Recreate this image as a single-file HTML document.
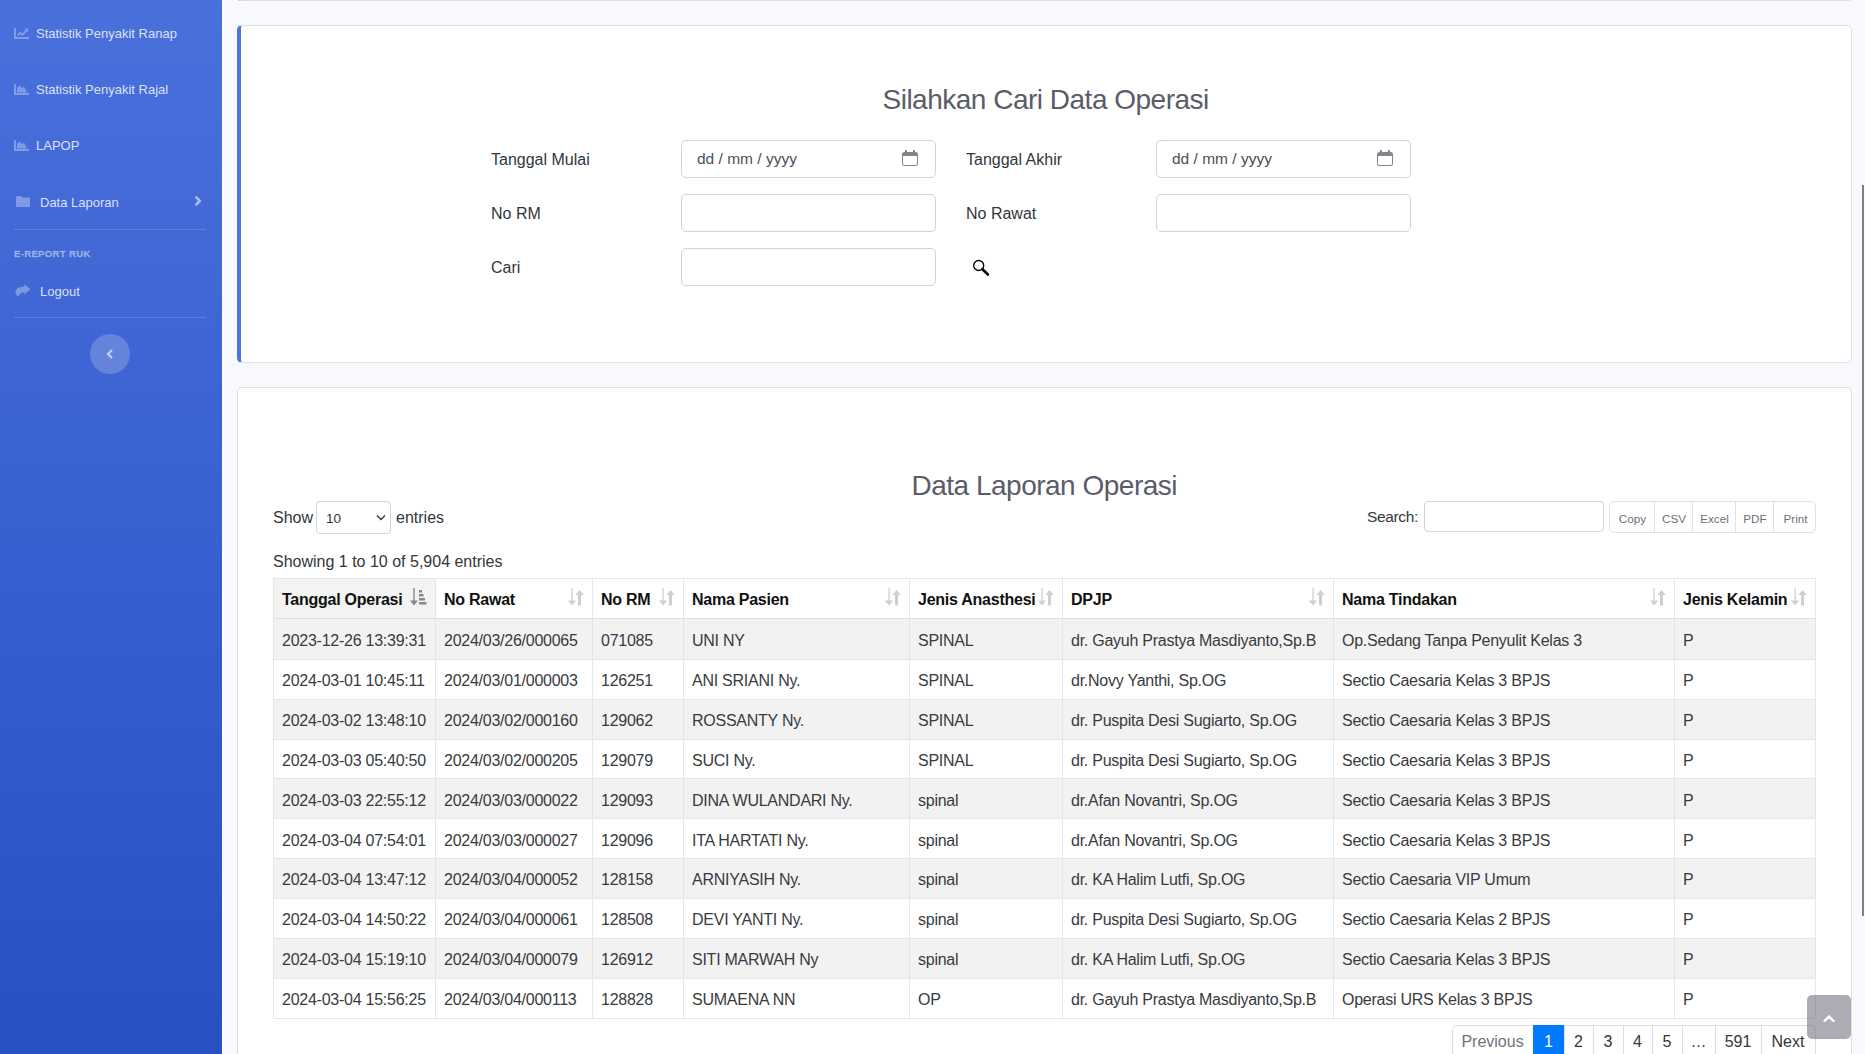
<!DOCTYPE html>
<html><head><meta charset="utf-8">
<style>
*{box-sizing:border-box;margin:0;padding:0}
html,body{width:1865px;height:1054px;overflow:hidden;background:#f8f9fc;font-family:"Liberation Sans",sans-serif;color:#212529}
.a{position:absolute;white-space:nowrap;line-height:1}
#sb{position:absolute;left:0;top:0;width:222px;height:1054px;background:linear-gradient(180deg,#4a70dc 0%,#2850c3 100%)}
#sbline{position:absolute;left:222px;top:0;width:1px;height:1054px;background:#fff}
.nl{font-size:13px;color:rgba(255,255,255,.82)}
.ic{position:absolute;fill:rgba(255,255,255,.32)}
.hr{position:absolute;left:14px;width:192px;height:1px;background:rgba(255,255,255,.15)}
.card{position:absolute;background:#fff;border:1px solid #dfdfe2;border-radius:4px}
.fc{position:absolute;background:#fff;border:1px solid #cfd3db;border-radius:5px}
.lbl{font-size:16px;color:#33363b}
</style></head><body>
<div id="sb">
  <!-- chart-line icon -->
  <svg class="ic" style="left:14px;top:28px" width="15" height="11" viewBox="0 0 15 11"><path d="M0 0h2v9h13v2H0z"/><path d="M3 7l3-3.5 2.5 2 3-3.5-1.3-1.2H14v3.8l-1.2-1.2L8.7 8 6.2 6 4.3 8.3z"/></svg>
  <div class="a nl" style="left:36px;top:27px">Statistik Penyakit Ranap</div>
  <!-- area chart -->
  <svg class="ic" style="left:14px;top:84px" width="15" height="11" viewBox="0 0 15 11"><path d="M0 0h2v9h13v2H0z"/><path d="M3 8.5V4l2.5-2.5 2.5 2.5 2-1.5 3 6z"/></svg>
  <div class="a nl" style="left:36px;top:83px">Statistik Penyakit Rajal</div>
  <svg class="ic" style="left:14px;top:140px" width="15" height="11" viewBox="0 0 15 11"><path d="M0 0h2v9h13v2H0z"/><path d="M3 8.5V4l2.5-2.5 2.5 2.5 2-1.5 3 6z"/></svg>
  <div class="a nl" style="left:36px;top:139px">LAPOP</div>
  <!-- folder -->
  <svg class="ic" style="left:16px;top:196px" width="14.3" height="11" viewBox="0 0 15 12" preserveAspectRatio="none"><path d="M0 1.2C0 .5.5 0 1.2 0h4l1.5 1.6h7c.7 0 1.3.5 1.3 1.2v8c0 .7-.6 1.2-1.3 1.2H1.2C.5 12 0 11.5 0 10.8z"/></svg>
  <div class="a nl" style="left:40px;top:195.5px">Data Laporan</div>
  <svg style="position:absolute;left:194px;top:195px" width="9" height="12" viewBox="0 0 9 12"><path d="M2.3 2.3l3.6 3.6-3.6 3.6" stroke="rgba(255,255,255,.55)" stroke-width="2.5" stroke-linecap="round" stroke-linejoin="round" fill="none"/></svg>
  <div class="hr" style="top:229px"></div>
  <div class="a" style="left:14px;top:248.5px;font-size:9.6px;font-weight:bold;color:rgba(255,255,255,.45);letter-spacing:.3px;-webkit-text-stroke:.3px rgba(255,255,255,.3)">E-REPORT RUK</div>
  <!-- share icon -->
  <svg class="ic" style="left:15px;top:284px" width="16" height="14" viewBox="0 0 16 14"><path d="M15.3 5.3L9.4 0.2V2.4C4.5 2.6 0.4 4.6 0.4 8C0.4 10 1.8 11.8 3.4 12.7C3.8 10.6 5.6 8.6 9.4 8.3V10.4Z"/></svg>
  <div class="a nl" style="left:40px;top:284.5px">Logout</div>
  <div class="hr" style="top:317px"></div>
  <div style="position:absolute;left:90px;top:334px;width:40px;height:40px;border-radius:50%;background:rgba(255,255,255,.2)"></div>
  <svg style="position:absolute;left:106px;top:349px" width="8" height="10" viewBox="0 0 8 10"><path d="M6 1L2 5l4 4" stroke="rgba(255,255,255,.62)" stroke-width="2.2" fill="none"/></svg>
</div>
<div id="sbline"></div>

<!-- top card remnant -->
<div class="card" style="left:237px;top:-20px;width:1615px;height:21px;border-left:4px solid #4e73df"></div>

<!-- card 1 -->
<div class="card" style="left:237px;top:25px;width:1615px;height:338px;border-left:4px solid #4e73df;border-radius:5px"></div>
<div class="a" style="left:882.5px;top:86.2px;font-size:28px;letter-spacing:-.5px;color:#5a5c69">Silahkan Cari Data Operasi</div>

<div class="a lbl" style="left:491px;top:152px">Tanggal Mulai</div>
<div class="fc" style="left:681px;top:140px;width:255px;height:38px"></div>
<div class="a" style="left:697px;top:151px;font-size:15.5px;color:#495057">dd / mm / yyyy</div>
<svg style="position:absolute;left:902px;top:150px" width="16" height="16" viewBox="0 0 16 16"><path d="M2.5 2h11A2.5 2.5 0 0 1 16 4.5v9a2.5 2.5 0 0 1-2.5 2.5h-11A2.5 2.5 0 0 1 0 13.5v-9A2.5 2.5 0 0 1 2.5 2zM1 6v7.5A1.5 1.5 0 0 0 2.5 15h11a1.5 1.5 0 0 0 1.5-1.5V6z" fill="#80868b" fill-rule="evenodd"/><rect x="3" y="0" width="2" height="3" fill="#80868b"/><rect x="11" y="0" width="2" height="3" fill="#80868b"/></svg>

<div class="a lbl" style="left:966px;top:152px">Tanggal Akhir</div>
<div class="fc" style="left:1156px;top:140px;width:255px;height:38px"></div>
<div class="a" style="left:1172px;top:151px;font-size:15.5px;color:#495057">dd / mm / yyyy</div>
<svg style="position:absolute;left:1377px;top:150px" width="16" height="16" viewBox="0 0 16 16"><path d="M2.5 2h11A2.5 2.5 0 0 1 16 4.5v9a2.5 2.5 0 0 1-2.5 2.5h-11A2.5 2.5 0 0 1 0 13.5v-9A2.5 2.5 0 0 1 2.5 2zM1 6v7.5A1.5 1.5 0 0 0 2.5 15h11a1.5 1.5 0 0 0 1.5-1.5V6z" fill="#80868b" fill-rule="evenodd"/><rect x="3" y="0" width="2" height="3" fill="#80868b"/><rect x="11" y="0" width="2" height="3" fill="#80868b"/></svg>

<div class="a lbl" style="left:491px;top:206px">No RM</div>
<div class="fc" style="left:681px;top:194px;width:255px;height:38px"></div>
<div class="a lbl" style="left:966px;top:206px">No Rawat</div>
<div class="fc" style="left:1156px;top:194px;width:255px;height:38px"></div>

<div class="a lbl" style="left:491px;top:260px">Cari</div>
<div class="fc" style="left:681px;top:248px;width:255px;height:38px"></div>
<svg style="position:absolute;left:972px;top:259px" width="18" height="18" viewBox="0 0 18 18"><circle cx="6.7" cy="6.5" r="5" fill="none" stroke="#000" stroke-width="1.3"/><path d="M10.4 10.2l5.5 5.3" stroke="#000" stroke-width="2.6" stroke-linecap="round"/></svg>

<!-- card 2 -->
<div class="card" style="left:237px;top:387px;width:1615px;height:800px;border-radius:5px"></div>
<!--C2-->
<div class="a" style="left:911.5px;top:472.2px;font-size:28px;letter-spacing:-.5px;color:#5a5c69">Data Laporan Operasi</div>
<div class="a lbl" style="left:273px;top:510px">Show</div>
<div class="fc" style="left:316px;top:501px;width:75px;height:33px;border-radius:4px"></div>
<div class="a" style="left:326px;top:511.5px;font-size:13.6px;color:#33363b">10</div>
<svg style="position:absolute;left:376px;top:514px" width="10" height="8" viewBox="0 0 10 8"><path d="M1 1.5l4 4 4-4" stroke="#343a40" stroke-width="1.4" fill="none"/></svg>
<div class="a lbl" style="left:396px;top:510px">entries</div>
<div class="a lbl" style="left:1367px;top:509px;font-size:15.5px;letter-spacing:-.35px">Search:</div>
<div class="fc" style="left:1424px;top:501px;width:180px;height:31px;border-radius:4px"></div>
<div style="position:absolute;left:1609px;top:501px;width:207px;height:32px;border:1px solid #dfe2e7;border-radius:5px;background:#fff"></div>
<div style="position:absolute;left:1654px;top:502px;width:1px;height:30px;background:#dfe2e7"></div>
<div style="position:absolute;left:1692px;top:502px;width:1px;height:30px;background:#dfe2e7"></div>
<div style="position:absolute;left:1735px;top:502px;width:1px;height:30px;background:#dfe2e7"></div>
<div style="position:absolute;left:1773px;top:502px;width:1px;height:30px;background:#dfe2e7"></div>
<div class="a" style="left:1610px;width:45px;text-align:center;top:512.5px;font-size:11.7px;color:#6c6e78">Copy</div>
<div class="a" style="left:1655px;width:38px;text-align:center;top:512.5px;font-size:11.7px;color:#6c6e78">CSV</div>
<div class="a" style="left:1693px;width:43px;text-align:center;top:512.5px;font-size:11.7px;color:#6c6e78">Excel</div>
<div class="a" style="left:1736px;width:38px;text-align:center;top:512.5px;font-size:11.7px;color:#6c6e78">PDF</div>
<div class="a" style="left:1774px;width:43px;text-align:center;top:512.5px;font-size:11.7px;color:#6c6e78">Print</div>
<div class="a lbl" style="left:273px;top:554px">Showing 1 to 10 of 5,904 entries</div>
<div style="position:absolute;left:273px;top:578px;width:1543px;height:1px;background:#e3e6f0"></div>
<div style="position:absolute;left:273px;top:579px;width:162px;height:39px;background:#f3f3f3"></div>
<div style="position:absolute;left:273px;top:619px;width:1542px;height:40px;background:#f2f2f2"></div>
<div style="position:absolute;left:273px;top:618px;width:1543px;height:1px;background:#dedfe3"></div>
<div style="position:absolute;left:273px;top:660px;width:1542px;height:39px;background:#fff"></div>
<div style="position:absolute;left:273px;top:659px;width:1543px;height:1px;background:#e3e6ea"></div>
<div style="position:absolute;left:273px;top:700px;width:1542px;height:39px;background:#f2f2f2"></div>
<div style="position:absolute;left:273px;top:699px;width:1543px;height:1px;background:#e3e6ea"></div>
<div style="position:absolute;left:273px;top:740px;width:1542px;height:38px;background:#fff"></div>
<div style="position:absolute;left:273px;top:739px;width:1543px;height:1px;background:#e3e6ea"></div>
<div style="position:absolute;left:273px;top:779px;width:1542px;height:39px;background:#f2f2f2"></div>
<div style="position:absolute;left:273px;top:778px;width:1543px;height:1px;background:#e3e6ea"></div>
<div style="position:absolute;left:273px;top:819px;width:1542px;height:39px;background:#fff"></div>
<div style="position:absolute;left:273px;top:818px;width:1543px;height:1px;background:#e3e6ea"></div>
<div style="position:absolute;left:273px;top:859px;width:1542px;height:39px;background:#f2f2f2"></div>
<div style="position:absolute;left:273px;top:858px;width:1543px;height:1px;background:#e3e6ea"></div>
<div style="position:absolute;left:273px;top:899px;width:1542px;height:39px;background:#fff"></div>
<div style="position:absolute;left:273px;top:898px;width:1543px;height:1px;background:#e3e6ea"></div>
<div style="position:absolute;left:273px;top:939px;width:1542px;height:39px;background:#f2f2f2"></div>
<div style="position:absolute;left:273px;top:938px;width:1543px;height:1px;background:#e3e6ea"></div>
<div style="position:absolute;left:273px;top:979px;width:1542px;height:39px;background:#fff"></div>
<div style="position:absolute;left:273px;top:978px;width:1543px;height:1px;background:#e3e6ea"></div>
<div style="position:absolute;left:273px;top:1018px;width:1543px;height:1px;background:#e3e6ea"></div>
<div style="position:absolute;left:273px;top:578px;width:1px;height:441px;background:#e6e6e6"></div>
<div style="position:absolute;left:435px;top:578px;width:1px;height:441px;background:#e6e6e6"></div>
<div style="position:absolute;left:592px;top:578px;width:1px;height:441px;background:#e6e6e6"></div>
<div style="position:absolute;left:683px;top:578px;width:1px;height:441px;background:#e6e6e6"></div>
<div style="position:absolute;left:909px;top:578px;width:1px;height:441px;background:#e6e6e6"></div>
<div style="position:absolute;left:1062px;top:578px;width:1px;height:441px;background:#e6e6e6"></div>
<div style="position:absolute;left:1333px;top:578px;width:1px;height:441px;background:#e6e6e6"></div>
<div style="position:absolute;left:1674px;top:578px;width:1px;height:441px;background:#e6e6e6"></div>
<div style="position:absolute;left:1815px;top:578px;width:1px;height:441px;background:#e6e6e6"></div>
<div class="a" style="left:282px;top:592px;font-size:16px;letter-spacing:-.25px;font-weight:bold;color:#111">Tanggal Operasi</div>
<svg style="position:absolute;left:409px;top:588px" width="18" height="18" viewBox="0 0 18 18" fill="#888"><rect x="4.3" y="0" width="1.4" height="13"/><path d="M1 12.5h8l-4 5z"/><rect x="10" y="2" width="3" height="2.5"/><rect x="10" y="6" width="4.5" height="2.5"/><rect x="10" y="10" width="6" height="2.5"/><rect x="10" y="14" width="7.5" height="2.5"/></svg>
<div class="a" style="left:444px;top:592px;font-size:16px;letter-spacing:-.25px;font-weight:bold;color:#111">No Rawat</div>
<svg style="position:absolute;left:567px;top:588px" width="17" height="18" viewBox="0 0 17 18" fill="#cfcfd3"><rect x="4.4" y="0" width="1.3" height="13"/><path d="M1 12.5h8l-4 5z"/><rect x="11" y="6" width="3" height="11.5"/><path d="M8.3 7h8.5l-4.25-5z"/></svg>
<div class="a" style="left:601px;top:592px;font-size:16px;letter-spacing:-.25px;font-weight:bold;color:#111">No RM</div>
<svg style="position:absolute;left:658px;top:588px" width="17" height="18" viewBox="0 0 17 18" fill="#cfcfd3"><rect x="4.4" y="0" width="1.3" height="13"/><path d="M1 12.5h8l-4 5z"/><rect x="11" y="6" width="3" height="11.5"/><path d="M8.3 7h8.5l-4.25-5z"/></svg>
<div class="a" style="left:692px;top:592px;font-size:16px;letter-spacing:-.25px;font-weight:bold;color:#111">Nama Pasien</div>
<svg style="position:absolute;left:884px;top:588px" width="17" height="18" viewBox="0 0 17 18" fill="#cfcfd3"><rect x="4.4" y="0" width="1.3" height="13"/><path d="M1 12.5h8l-4 5z"/><rect x="11" y="6" width="3" height="11.5"/><path d="M8.3 7h8.5l-4.25-5z"/></svg>
<div class="a" style="left:918px;top:592px;font-size:16px;letter-spacing:-.25px;font-weight:bold;color:#111">Jenis Anasthesi</div>
<svg style="position:absolute;left:1037px;top:588px" width="17" height="18" viewBox="0 0 17 18" fill="#cfcfd3"><rect x="4.4" y="0" width="1.3" height="13"/><path d="M1 12.5h8l-4 5z"/><rect x="11" y="6" width="3" height="11.5"/><path d="M8.3 7h8.5l-4.25-5z"/></svg>
<div class="a" style="left:1071px;top:592px;font-size:16px;letter-spacing:-.25px;font-weight:bold;color:#111">DPJP</div>
<svg style="position:absolute;left:1308px;top:588px" width="17" height="18" viewBox="0 0 17 18" fill="#cfcfd3"><rect x="4.4" y="0" width="1.3" height="13"/><path d="M1 12.5h8l-4 5z"/><rect x="11" y="6" width="3" height="11.5"/><path d="M8.3 7h8.5l-4.25-5z"/></svg>
<div class="a" style="left:1342px;top:592px;font-size:16px;letter-spacing:-.25px;font-weight:bold;color:#111">Nama Tindakan</div>
<svg style="position:absolute;left:1649px;top:588px" width="17" height="18" viewBox="0 0 17 18" fill="#cfcfd3"><rect x="4.4" y="0" width="1.3" height="13"/><path d="M1 12.5h8l-4 5z"/><rect x="11" y="6" width="3" height="11.5"/><path d="M8.3 7h8.5l-4.25-5z"/></svg>
<div class="a" style="left:1683px;top:592px;font-size:16px;letter-spacing:-.25px;font-weight:bold;color:#111">Jenis Kelamin</div>
<svg style="position:absolute;left:1790px;top:588px" width="17" height="18" viewBox="0 0 17 18" fill="#cfcfd3"><rect x="4.4" y="0" width="1.3" height="13"/><path d="M1 12.5h8l-4 5z"/><rect x="11" y="6" width="3" height="11.5"/><path d="M8.3 7h8.5l-4.25-5z"/></svg>
<div class="a" style="left:282px;top:633.0px;font-size:16px;letter-spacing:-.25px;color:#383b40">2023-12-26 13:39:31</div>
<div class="a" style="left:444px;top:633.0px;font-size:16px;letter-spacing:-.25px;color:#383b40">2024/03/26/000065</div>
<div class="a" style="left:601px;top:633.0px;font-size:16px;letter-spacing:-.25px;color:#383b40">071085</div>
<div class="a" style="left:692px;top:633.0px;font-size:16px;letter-spacing:-.25px;color:#383b40">UNI NY</div>
<div class="a" style="left:918px;top:633.0px;font-size:16px;letter-spacing:-.25px;color:#383b40">SPINAL</div>
<div class="a" style="left:1071px;top:633.0px;font-size:16px;letter-spacing:-.25px;color:#383b40">dr. Gayuh Prastya Masdiyanto,Sp.B</div>
<div class="a" style="left:1342px;top:633.0px;font-size:16px;letter-spacing:-.25px;color:#383b40">Op.Sedang Tanpa Penyulit Kelas 3</div>
<div class="a" style="left:1683px;top:633.0px;font-size:16px;letter-spacing:-.25px;color:#383b40">P</div>
<div class="a" style="left:282px;top:672.9px;font-size:16px;letter-spacing:-.25px;color:#383b40">2024-03-01 10:45:11</div>
<div class="a" style="left:444px;top:672.9px;font-size:16px;letter-spacing:-.25px;color:#383b40">2024/03/01/000003</div>
<div class="a" style="left:601px;top:672.9px;font-size:16px;letter-spacing:-.25px;color:#383b40">126251</div>
<div class="a" style="left:692px;top:672.9px;font-size:16px;letter-spacing:-.25px;color:#383b40">ANI SRIANI Ny.</div>
<div class="a" style="left:918px;top:672.9px;font-size:16px;letter-spacing:-.25px;color:#383b40">SPINAL</div>
<div class="a" style="left:1071px;top:672.9px;font-size:16px;letter-spacing:-.25px;color:#383b40">dr.Novy Yanthi, Sp.OG</div>
<div class="a" style="left:1342px;top:672.9px;font-size:16px;letter-spacing:-.25px;color:#383b40">Sectio Caesaria Kelas 3 BPJS</div>
<div class="a" style="left:1683px;top:672.9px;font-size:16px;letter-spacing:-.25px;color:#383b40">P</div>
<div class="a" style="left:282px;top:712.8px;font-size:16px;letter-spacing:-.25px;color:#383b40">2024-03-02 13:48:10</div>
<div class="a" style="left:444px;top:712.8px;font-size:16px;letter-spacing:-.25px;color:#383b40">2024/03/02/000160</div>
<div class="a" style="left:601px;top:712.8px;font-size:16px;letter-spacing:-.25px;color:#383b40">129062</div>
<div class="a" style="left:692px;top:712.8px;font-size:16px;letter-spacing:-.25px;color:#383b40">ROSSANTY Ny.</div>
<div class="a" style="left:918px;top:712.8px;font-size:16px;letter-spacing:-.25px;color:#383b40">SPINAL</div>
<div class="a" style="left:1071px;top:712.8px;font-size:16px;letter-spacing:-.25px;color:#383b40">dr. Puspita Desi Sugiarto, Sp.OG</div>
<div class="a" style="left:1342px;top:712.8px;font-size:16px;letter-spacing:-.25px;color:#383b40">Sectio Caesaria Kelas 3 BPJS</div>
<div class="a" style="left:1683px;top:712.8px;font-size:16px;letter-spacing:-.25px;color:#383b40">P</div>
<div class="a" style="left:282px;top:752.7px;font-size:16px;letter-spacing:-.25px;color:#383b40">2024-03-03 05:40:50</div>
<div class="a" style="left:444px;top:752.7px;font-size:16px;letter-spacing:-.25px;color:#383b40">2024/03/02/000205</div>
<div class="a" style="left:601px;top:752.7px;font-size:16px;letter-spacing:-.25px;color:#383b40">129079</div>
<div class="a" style="left:692px;top:752.7px;font-size:16px;letter-spacing:-.25px;color:#383b40">SUCI Ny.</div>
<div class="a" style="left:918px;top:752.7px;font-size:16px;letter-spacing:-.25px;color:#383b40">SPINAL</div>
<div class="a" style="left:1071px;top:752.7px;font-size:16px;letter-spacing:-.25px;color:#383b40">dr. Puspita Desi Sugiarto, Sp.OG</div>
<div class="a" style="left:1342px;top:752.7px;font-size:16px;letter-spacing:-.25px;color:#383b40">Sectio Caesaria Kelas 3 BPJS</div>
<div class="a" style="left:1683px;top:752.7px;font-size:16px;letter-spacing:-.25px;color:#383b40">P</div>
<div class="a" style="left:282px;top:792.6px;font-size:16px;letter-spacing:-.25px;color:#383b40">2024-03-03 22:55:12</div>
<div class="a" style="left:444px;top:792.6px;font-size:16px;letter-spacing:-.25px;color:#383b40">2024/03/03/000022</div>
<div class="a" style="left:601px;top:792.6px;font-size:16px;letter-spacing:-.25px;color:#383b40">129093</div>
<div class="a" style="left:692px;top:792.6px;font-size:16px;letter-spacing:-.25px;color:#383b40">DINA WULANDARI Ny.</div>
<div class="a" style="left:918px;top:792.6px;font-size:16px;letter-spacing:-.25px;color:#383b40">spinal</div>
<div class="a" style="left:1071px;top:792.6px;font-size:16px;letter-spacing:-.25px;color:#383b40">dr.Afan Novantri, Sp.OG</div>
<div class="a" style="left:1342px;top:792.6px;font-size:16px;letter-spacing:-.25px;color:#383b40">Sectio Caesaria Kelas 3 BPJS</div>
<div class="a" style="left:1683px;top:792.6px;font-size:16px;letter-spacing:-.25px;color:#383b40">P</div>
<div class="a" style="left:282px;top:832.5px;font-size:16px;letter-spacing:-.25px;color:#383b40">2024-03-04 07:54:01</div>
<div class="a" style="left:444px;top:832.5px;font-size:16px;letter-spacing:-.25px;color:#383b40">2024/03/03/000027</div>
<div class="a" style="left:601px;top:832.5px;font-size:16px;letter-spacing:-.25px;color:#383b40">129096</div>
<div class="a" style="left:692px;top:832.5px;font-size:16px;letter-spacing:-.25px;color:#383b40">ITA HARTATI Ny.</div>
<div class="a" style="left:918px;top:832.5px;font-size:16px;letter-spacing:-.25px;color:#383b40">spinal</div>
<div class="a" style="left:1071px;top:832.5px;font-size:16px;letter-spacing:-.25px;color:#383b40">dr.Afan Novantri, Sp.OG</div>
<div class="a" style="left:1342px;top:832.5px;font-size:16px;letter-spacing:-.25px;color:#383b40">Sectio Caesaria Kelas 3 BPJS</div>
<div class="a" style="left:1683px;top:832.5px;font-size:16px;letter-spacing:-.25px;color:#383b40">P</div>
<div class="a" style="left:282px;top:872.4px;font-size:16px;letter-spacing:-.25px;color:#383b40">2024-03-04 13:47:12</div>
<div class="a" style="left:444px;top:872.4px;font-size:16px;letter-spacing:-.25px;color:#383b40">2024/03/04/000052</div>
<div class="a" style="left:601px;top:872.4px;font-size:16px;letter-spacing:-.25px;color:#383b40">128158</div>
<div class="a" style="left:692px;top:872.4px;font-size:16px;letter-spacing:-.25px;color:#383b40">ARNIYASIH Ny.</div>
<div class="a" style="left:918px;top:872.4px;font-size:16px;letter-spacing:-.25px;color:#383b40">spinal</div>
<div class="a" style="left:1071px;top:872.4px;font-size:16px;letter-spacing:-.25px;color:#383b40">dr. KA Halim Lutfi, Sp.OG</div>
<div class="a" style="left:1342px;top:872.4px;font-size:16px;letter-spacing:-.25px;color:#383b40">Sectio Caesaria VIP Umum</div>
<div class="a" style="left:1683px;top:872.4px;font-size:16px;letter-spacing:-.25px;color:#383b40">P</div>
<div class="a" style="left:282px;top:912.3px;font-size:16px;letter-spacing:-.25px;color:#383b40">2024-03-04 14:50:22</div>
<div class="a" style="left:444px;top:912.3px;font-size:16px;letter-spacing:-.25px;color:#383b40">2024/03/04/000061</div>
<div class="a" style="left:601px;top:912.3px;font-size:16px;letter-spacing:-.25px;color:#383b40">128508</div>
<div class="a" style="left:692px;top:912.3px;font-size:16px;letter-spacing:-.25px;color:#383b40">DEVI YANTI Ny.</div>
<div class="a" style="left:918px;top:912.3px;font-size:16px;letter-spacing:-.25px;color:#383b40">spinal</div>
<div class="a" style="left:1071px;top:912.3px;font-size:16px;letter-spacing:-.25px;color:#383b40">dr. Puspita Desi Sugiarto, Sp.OG</div>
<div class="a" style="left:1342px;top:912.3px;font-size:16px;letter-spacing:-.25px;color:#383b40">Sectio Caesaria Kelas 2 BPJS</div>
<div class="a" style="left:1683px;top:912.3px;font-size:16px;letter-spacing:-.25px;color:#383b40">P</div>
<div class="a" style="left:282px;top:952.2px;font-size:16px;letter-spacing:-.25px;color:#383b40">2024-03-04 15:19:10</div>
<div class="a" style="left:444px;top:952.2px;font-size:16px;letter-spacing:-.25px;color:#383b40">2024/03/04/000079</div>
<div class="a" style="left:601px;top:952.2px;font-size:16px;letter-spacing:-.25px;color:#383b40">126912</div>
<div class="a" style="left:692px;top:952.2px;font-size:16px;letter-spacing:-.25px;color:#383b40">SITI MARWAH Ny</div>
<div class="a" style="left:918px;top:952.2px;font-size:16px;letter-spacing:-.25px;color:#383b40">spinal</div>
<div class="a" style="left:1071px;top:952.2px;font-size:16px;letter-spacing:-.25px;color:#383b40">dr. KA Halim Lutfi, Sp.OG</div>
<div class="a" style="left:1342px;top:952.2px;font-size:16px;letter-spacing:-.25px;color:#383b40">Sectio Caesaria Kelas 3 BPJS</div>
<div class="a" style="left:1683px;top:952.2px;font-size:16px;letter-spacing:-.25px;color:#383b40">P</div>
<div class="a" style="left:282px;top:992.1px;font-size:16px;letter-spacing:-.25px;color:#383b40">2024-03-04 15:56:25</div>
<div class="a" style="left:444px;top:992.1px;font-size:16px;letter-spacing:-.25px;color:#383b40">2024/03/04/000113</div>
<div class="a" style="left:601px;top:992.1px;font-size:16px;letter-spacing:-.25px;color:#383b40">128828</div>
<div class="a" style="left:692px;top:992.1px;font-size:16px;letter-spacing:-.25px;color:#383b40">SUMAENA NN</div>
<div class="a" style="left:918px;top:992.1px;font-size:16px;letter-spacing:-.25px;color:#383b40">OP</div>
<div class="a" style="left:1071px;top:992.1px;font-size:16px;letter-spacing:-.25px;color:#383b40">dr. Gayuh Prastya Masdiyanto,Sp.B</div>
<div class="a" style="left:1342px;top:992.1px;font-size:16px;letter-spacing:-.25px;color:#383b40">Operasi URS Kelas 3 BPJS</div>
<div class="a" style="left:1683px;top:992.1px;font-size:16px;letter-spacing:-.25px;color:#383b40">P</div>
<div style="position:absolute;left:1452px;top:1025px;width:364px;height:60px;border:1px solid #dcdde0;border-radius:5px;background:#fff"></div>
<div style="position:absolute;left:1533px;top:1025px;width:1px;height:40px;background:#dcdde0"></div>
<div style="position:absolute;left:1564px;top:1025px;width:1px;height:40px;background:#dcdde0"></div>
<div style="position:absolute;left:1593px;top:1025px;width:1px;height:40px;background:#dcdde0"></div>
<div style="position:absolute;left:1623px;top:1025px;width:1px;height:40px;background:#dcdde0"></div>
<div style="position:absolute;left:1652px;top:1025px;width:1px;height:40px;background:#dcdde0"></div>
<div style="position:absolute;left:1682px;top:1025px;width:1px;height:40px;background:#dcdde0"></div>
<div style="position:absolute;left:1715px;top:1025px;width:1px;height:40px;background:#dcdde0"></div>
<div style="position:absolute;left:1761px;top:1025px;width:1px;height:40px;background:#dcdde0"></div>
<div style="position:absolute;left:1533px;top:1025px;width:31px;height:40px;background:#007bff"></div>
<div class="a" style="left:1452px;width:81px;text-align:center;top:1033.7px;font-size:16px;color:#6c757d">Previous</div>
<div class="a" style="left:1533px;width:31px;text-align:center;top:1033.7px;font-size:16px;color:#fff">1</div>
<div class="a" style="left:1564px;width:29px;text-align:center;top:1033.7px;font-size:16px;color:#33363b">2</div>
<div class="a" style="left:1593px;width:30px;text-align:center;top:1033.7px;font-size:16px;color:#33363b">3</div>
<div class="a" style="left:1623px;width:29px;text-align:center;top:1033.7px;font-size:16px;color:#33363b">4</div>
<div class="a" style="left:1652px;width:30px;text-align:center;top:1033.7px;font-size:16px;color:#33363b">5</div>
<div class="a" style="left:1682px;width:33px;text-align:center;top:1033.7px;font-size:16px;color:#33363b">…</div>
<div class="a" style="left:1715px;width:46px;text-align:center;top:1033.7px;font-size:16px;color:#33363b">591</div>
<div class="a" style="left:1761px;width:54px;text-align:center;top:1033.7px;font-size:16px;color:#33363b">Next</div>
<div style="position:absolute;left:1807px;top:995px;width:44px;height:44px;border-radius:5px;background:rgba(90,92,105,.5)"></div>
<svg style="position:absolute;left:1823px;top:1014px" width="12" height="9" viewBox="0 0 12 9"><path d="M1.5 7L6 2.5 10.5 7" stroke="#fff" stroke-width="2.4" fill="none" stroke-linecap="round"/></svg>
<div style="position:absolute;left:1862px;top:185px;width:2px;height:731px;background:#808080"></div>
<!--/C2-->

</body></html>
